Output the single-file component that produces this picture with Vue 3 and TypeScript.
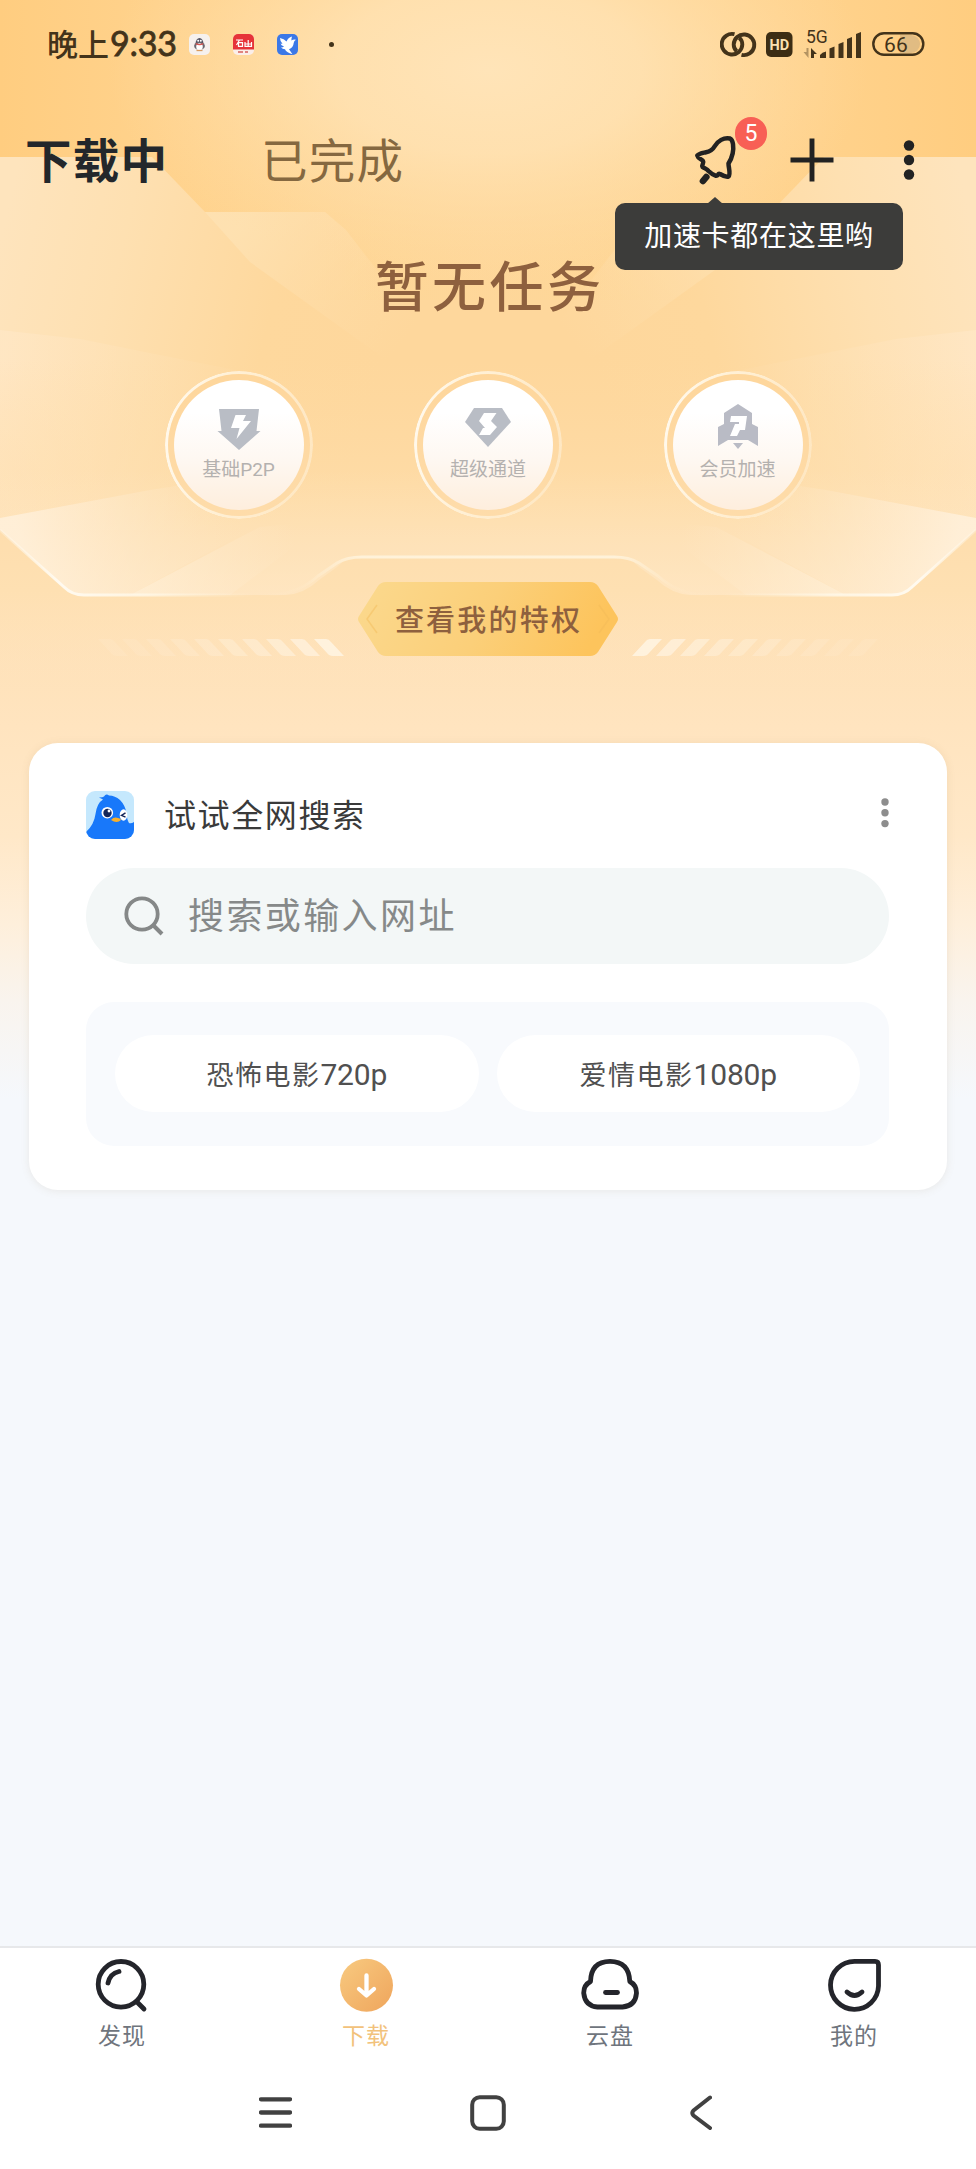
<script setup lang="ts">
interface Perk { label: string; kind: 'bolt' | 'gem' | 'rocket' }
interface Suggestion { title: string; quality: string }
interface NavItem { label: string; kind: 'discover' | 'download' | 'cloud' | 'mine'; active?: boolean }

const perks: Perk[] = [
  { label: '基础P2P', kind: 'bolt' },
  { label: '超级通道', kind: 'gem' },
  { label: '会员加速', kind: 'rocket' },
]
const suggestions: Suggestion[] = [
  { title: '恐怖电影', quality: '720p' },
  { title: '爱情电影', quality: '1080p' },
]
const navItems: NavItem[] = [
  { label: '发现', kind: 'discover' },
  { label: '下载', kind: 'download', active: true },
  { label: '云盘', kind: 'cloud' },
  { label: '我的', kind: 'mine' },
]
const stripes = Array.from({ length: 10 }, (_, i) => ({ x: 314 - i * 24, o: 0.66 * Math.pow(0.8, i) }))
</script>

<template>
  <div class="page">
    <svg class="backdrop" width="976" height="1100" viewBox="0 0 976 1100" aria-hidden="true">
      <defs>
        <linearGradient id="base" x1="0" y1="0" x2="0" y2="1">
          <stop offset="0" stop-color="#ffd694" />
          <stop offset=".36" stop-color="#fed79c" />
          <stop offset=".52" stop-color="#fedfb2" />
          <stop offset=".66" stop-color="#ffe4bf" />
          <stop offset=".76" stop-color="#ffe8c8" />
          <stop offset=".84" stop-color="#feefdb" />
          <stop offset=".91" stop-color="#f9f4ee" />
          <stop offset="1" stop-color="#f5f8fc" />
        </linearGradient>
        <linearGradient id="side" x1="0" y1="0" x2="1" y2="0">
          <stop offset="0" stop-color="#ffcd80" />
          <stop offset=".16" stop-color="#ffd28c" />
          <stop offset=".5" stop-color="#ffd794" stop-opacity="0" />
          <stop offset=".84" stop-color="#ffd28c" />
          <stop offset="1" stop-color="#ffcd80" />
        </linearGradient>
        <radialGradient id="glow" gradientUnits="userSpaceOnUse" cx="0" cy="0" r="1" gradientTransform="translate(488 70) scale(380 210)">
          <stop offset="0" stop-color="#ffe4b8" />
          <stop offset=".4" stop-color="#ffe2b3" stop-opacity=".85" />
          <stop offset="1" stop-color="#ffdca5" stop-opacity="0" />
        </radialGradient>
        <linearGradient id="wing" gradientUnits="userSpaceOnUse" x1="0" y1="240" x2="390" y2="330">
          <stop offset="0" stop-color="#fee4bd" />
          <stop offset=".3" stop-color="#fee0b1" />
          <stop offset=".7" stop-color="#fed89d" />
          <stop offset="1" stop-color="#fed89d" stop-opacity="0" />
        </linearGradient>
        <linearGradient id="band" gradientUnits="userSpaceOnUse" x1="250" y1="212" x2="410" y2="335">
          <stop offset="0" stop-color="#fee2b3" stop-opacity=".8" />
          <stop offset="1" stop-color="#fedda9" stop-opacity="0" />
        </linearGradient>
        <linearGradient id="shard" gradientUnits="userSpaceOnUse" x1="0" y1="400" x2="300" y2="430">
          <stop offset="0" stop-color="#ffe7c5" stop-opacity=".8" />
          <stop offset="1" stop-color="#fedba5" stop-opacity="0" />
        </linearGradient>
        <linearGradient id="pane" gradientUnits="userSpaceOnUse" x1="20" y1="540" x2="230" y2="480">
          <stop offset="0" stop-color="#fff0da" stop-opacity=".9" />
          <stop offset="1" stop-color="#ffe6c2" stop-opacity="0" />
        </linearGradient>
        <linearGradient id="facet" gradientUnits="userSpaceOnUse" x1="130" y1="590" x2="300" y2="560">
          <stop offset="0" stop-color="#fff0d8" stop-opacity=".75" />
          <stop offset="1" stop-color="#ffe9cb" stop-opacity="0" />
        </linearGradient>
        <linearGradient id="edge" gradientUnits="userSpaceOnUse" x1="0" y1="0" x2="976" y2="0">
          <stop offset="0" stop-color="#fff8ea" stop-opacity=".3" />
          <stop offset=".06" stop-color="#fffaf0" />
          <stop offset=".15" stop-color="#fff8e8" stop-opacity=".8" />
          <stop offset=".26" stop-color="#fff3dc" stop-opacity="0" />
          <stop offset=".31" stop-color="#fff3dc" stop-opacity=".1" />
          <stop offset=".37" stop-color="#fff3dc" stop-opacity=".95" />
          <stop offset=".63" stop-color="#fff3dc" stop-opacity=".95" />
          <stop offset=".69" stop-color="#fff3dc" stop-opacity=".1" />
          <stop offset=".74" stop-color="#fff3dc" stop-opacity="0" />
          <stop offset=".85" stop-color="#fff8e8" stop-opacity=".8" />
          <stop offset=".94" stop-color="#fffaf0" />
          <stop offset="1" stop-color="#fff8ea" stop-opacity=".3" />
        </linearGradient>
        <linearGradient id="floor" gradientUnits="userSpaceOnUse" x1="0" y1="470" x2="0" y2="595">
          <stop offset="0" stop-color="#ffe9c9" stop-opacity="0" />
          <stop offset="1" stop-color="#ffe9ca" stop-opacity=".6" />
        </linearGradient>
        <g id="half">
          <path d="M0 157H152L205 212H325L346 230L450 370V530H0Z" fill="url(#wing)" />
          <path d="M205 212H325L346 230L455 370H400L250 262Z" fill="url(#band)" />
          <path d="M0 330L80 339L240 371L330 392V530H0Z" fill="url(#shard)" />
        </g>
        <g id="panes">
          <path d="M0 518L150 490L280 470L240 535L130 595H80L65 588L0 530Z" fill="url(#pane)" />
          <path d="M130 595L260 527L330 520L230 595Z" fill="url(#facet)" />
        </g>
        <linearGradient id="mist" gradientUnits="userSpaceOnUse" x1="0" y1="360" x2="0" y2="530">
          <stop offset="0" stop-color="#fedca7" stop-opacity="0" />
          <stop offset="1" stop-color="#fee0b2" />
        </linearGradient>
        <linearGradient id="deck" gradientUnits="userSpaceOnUse" x1="0" y1="500" x2="0" y2="680">
          <stop offset="0" stop-color="#fedcab" />
          <stop offset=".5" stop-color="#fee0b2" />
          <stop offset="1" stop-color="#ffe4bf" stop-opacity="0" />
        </linearGradient>
      </defs>
      <rect width="976" height="1100" fill="url(#base)" />
      <rect width="976" height="400" fill="url(#side)" />
      <rect y="300" width="976" height="230" fill="#fed79c" />
      <use href="#half" />
      <use href="#half" transform="matrix(-1 0 0 1 976 0)" />
      <rect width="976" height="300" fill="url(#glow)" />
      <rect y="360" width="976" height="170" fill="url(#mist)" opacity=".7" />
      <path d="M0 530H976V680H0Z" fill="url(#deck)" />
      <path d="M0 470H976V530L911 588Q904 595 892 595H690Q672 594 657 580L639 567Q629 556 614 556H362Q347 556 337 567L319 580Q304 594 286 595H84Q72 595 65 588L0 530Z" fill="url(#floor)" />
      <use href="#panes" />
      <use href="#panes" transform="matrix(-1 0 0 1 976 0)" />
      <path d="M0 530L64 587Q72 595 84 595H270Q298 594 318 576L337 563Q347 557 362 557H614Q629 557 639 563L658 576Q678 594 706 595H892Q904 595 912 587L976 530" fill="none" stroke="url(#edge)" stroke-width="3" />
      <g fill="#fffaf0">
        <path v-for="s in stripes" :key="'l' + s.x" :d="`M${s.x} 639h12q3 0 5 3l13 14h-11q-4 0-6-3z`" :opacity="s.o" />
        <g transform="matrix(-1 0 0 1 976 0)">
          <path v-for="s in stripes" :key="'r' + s.x" :d="`M${s.x} 639h12q3 0 5 3l13 14h-11q-4 0-6-3z`" :opacity="s.o" />
        </g>
      </g>
    </svg>

    <header class="status">
      <span class="clock">晚上<span class="digits">9:33</span></span>
      <div class="notices">
        <svg width="21" height="21" viewBox="0 0 21 21">
          <rect width="21" height="21" rx="5" fill="#f6f1ee" />
          <ellipse cx="10.500" cy="10" rx="4" ry="6" fill="#565665" />
          <ellipse cx="10.500" cy="12" rx="5.400" ry="4" fill="#6b6870" />
          <ellipse cx="10.500" cy="12.800" rx="3.300" ry="3.600" fill="#fff" />
          <path d="M6.800 9.600q3.700 2 7.400 0" stroke="#d95450" stroke-width="1.200" fill="none" />
          <circle cx="9.200" cy="6.800" r="1" fill="#fff" /><circle cx="11.800" cy="6.800" r="1" fill="#fff" />
          <path d="M7.500 16.500h6" stroke="#d99a5d" stroke-width="1.300" />
        </svg>
        <svg width="21" height="21" viewBox="0 0 21 21">
          <rect width="21" height="21" rx="5" fill="#fbeee9" />
          <path d="M0 5a5 5 0 0 1 5-5h11a5 5 0 0 1 5 5v10.500H0z" fill="#e63339" />
          <path d="M3 6h7M6.500 6l-3 5M5.500 8.700h4v3.600h-4zM12 8v4.300h6.500V8M15.200 6v6M12 10h6.500" stroke="#fff" stroke-width="1.200" fill="none" />
          <path d="M5 18h5M12 18h3" stroke="#d8625c" stroke-width="1.300" />
        </svg>
        <svg width="21" height="21" viewBox="0 0 21 21">
          <rect width="21" height="21" rx="5" fill="#3b78e7" />
          <path d="M3 4q4 .5 6.500 3.500Q11 3.500 15 2.500q-.8 2.500-.5 4 2-1.500 4.500-.8-2 1-2.300 3.300-.5 5-4.700 6.200l3.500 5q-6.500-2-7.500-5-2.500 0-4-1.700 2.200 0 3-1-3-.8-3.500-3 1 .5 2 .3Q3 7.500 3 4z" fill="#fff" />
        </svg>
      </div>
      <i class="more-dot"></i>
      <svg class="indicators" width="206" height="34" viewBox="720 27 206 34">
        <g fill="none" stroke="#43331a" stroke-width="3.900">
          <path d="M734.500 34.200A10.300 10.300 0 1 0 742.300 44.500Q742.300 40.500 739.300 37.800" />
          <path d="M741.500 54.800A10.300 10.300 0 1 0 733.700 44.500Q733.700 48.500 736.700 51.200" />
        </g>
        <rect x="766" y="32" width="26.500" height="25" rx="5" fill="#3c2d14" />
        <text x="779.300" y="49.500" text-anchor="middle" font-size="14.500" font-weight="700" fill="#fbe0b0">HD</text>
        <text x="806" y="43" font-size="17.500" fill="#43331a">5G</text>
        <g fill="#43331a">
          <path d="M820 58v-3q2-3 6-3.500V58zM829.500 58V48.500l5-2V58zM838.500 58V44l5-2V58zM847 58V39l5-2V58zM856 58V34l5-2V58z" />
          <path d="M811 48l6 6h-3v4h-3z" />
          <path d="M808.500 48v10l-5-6h3v-4z" opacity=".4" />
        </g>
        <path d="M900 35h11a9 9 0 0 1 0 18h-11z" fill="#d9b682" opacity=".8" />
        <rect x="873.300" y="33.300" width="50" height="21.500" rx="10.700" fill="none" stroke="#43331a" stroke-width="2.400" />
        <text x="884" y="51.800" font-size="21" letter-spacing=".3" fill="#43331a">66</text>
      </svg>
    </header>

    <nav class="tabs">
      <span class="tab current">下载中</span>
      <span class="tab">已完成</span>
      <div class="actions">
        <div class="boost">
          <svg width="50" height="56" viewBox="692 132 50 56">
            <path d="M731 138.500C725 137 718.500 141 715.500 146.500C713.500 150 711 151.500 707 152.300C703.500 153 700.500 153 698.300 155.500C699 158.500 702.500 159 704 161C705.500 163.500 702 165 703.500 167C705.500 168.500 708 168.500 709.500 171C712 173.500 714.500 175 717 175.800C719.500 176 718.500 173 721 174C723.500 175.500 726.500 177.500 729.500 176.500C732 174 729.500 168 729.500 163.500C733 158 735 151 734 144C733.500 141 732.500 139.200 731 138.500Z" fill="none" stroke="#222" stroke-width="4.500" stroke-linejoin="round" />
            <path d="M707.300 177l-3.300 4" stroke="#222" stroke-width="6.600" stroke-linecap="round" />
          </svg>
          <span class="badge">5</span>
          <div class="tip">加速卡都在这里哟</div>
        </div>
        <svg class="plus" width="44" height="44" viewBox="0 0 44 44"><path d="M22 .5v43M.5 22h43" stroke="#222" stroke-width="4.900" /></svg>
        <svg class="dots" width="12" height="42" viewBox="0 0 12 42"><g fill="#222"><circle cx="6" cy="6.500" r="5.200" /><circle cx="6" cy="21" r="5.200" /><circle cx="6" cy="35.500" r="5.200" /></g></svg>
      </div>
    </nav>

    <section class="hero">
      <h1>暂无任务</h1>
      <div class="perks">
        <div v-for="p in perks" :key="p.kind" class="perk">
          <div class="disc">
            <svg width="52" height="52" viewBox="-26 -26 52 52">
              <g v-if="p.kind === 'bolt'">
                <path d="M-20-21H20L17.500 1H21.500L0 20-21.500 1H-17.500Z" fill="#b9bdc5" />
                <path d="M-3.500-15H7L4-9H12L-2.500 9 .5-2H-8Z" fill="#fff" />
              </g>
              <g v-else-if="p.kind === 'gem'">
                <path d="M-14-22H14L23-8 0 17-23-8Z" fill="#b9bdc5" />
                <path d="M-4-17H8.500L4-10.500 3-9 9-3 2 5H-9L-5-2H-3L-9-9Z" fill="#fff" />
              </g>
              <g v-else>
                <path d="M0-26 14-17V-6L20-3V16L10 10H-10L-20 16V-3L-14-6V-17Z" fill="#b9bbc5" />
                <path d="M-7-14H9L7 0H2L-1 6H-8L-3-6H1V-8H-8Z" fill="#fff" />
                <path d="M-5 13H5L0 19Z" fill="#b9bbc5" />
              </g>
            </svg>
            <span>{{ p.label }}</span>
          </div>
        </div>
      </div>
      <div class="privilege">
        <svg class="plate" width="262" height="74" viewBox="0 0 262 74">
          <defs><linearGradient id="gold" x1="0" y1="0" x2="1" y2=".15"><stop offset="0" stop-color="#fbd98e" /><stop offset=".55" stop-color="#fbcf79" /><stop offset="1" stop-color="#fdc45c" /></linearGradient></defs>
          <path d="M29 0H233Q238 0 241 4L260 34Q262 37 260 40L241 70Q238 74 233 74H29Q24 74 21 70L2 40Q0 37 2 34L21 4Q24 0 29 0Z" fill="url(#gold)" />
          <path d="M20 23L10 37L20 51M242 23L252 37L242 51" fill="none" stroke="#f1bb58" stroke-width="1.500" opacity=".45" />
        </svg>
        <span>查看我的特权</span>
      </div>
    </section>

    <section class="card">
      <div class="head">
        <svg width="48" height="48" viewBox="0 0 48 48">
          <defs><clipPath id="tile"><rect width="48" height="48" rx="9" /></clipPath></defs>
          <g clip-path="url(#tile)">
            <rect width="48" height="48" fill="#c5e8fd" />
            <path d="M0 48V41Q8 34 9.500 23Q11 12 17 8.500L13 6.500Q17 6.500 18 5.500Q20 2 23 4.500Q29 4.500 34 9Q39 14 40.500 22Q41 29 43 32Q45 33 48 31V48Z" fill="#1878fa" />
            <circle cx="21.300" cy="21.700" r="5.800" fill="#fff" /><circle cx="21.500" cy="22" r="4.200" fill="#14265a" /><circle cx="23" cy="20" r="1.400" fill="#fff" />
            <ellipse cx="37.500" cy="24" rx="3.800" ry="5.800" fill="#fff" /><path d="M39.500 21.800l-4 2.500 4 1.800" stroke="#14265a" stroke-width="1.400" fill="none" />
            <path d="M25 29q3-3.500 7-2 3 .5 3 2-4 4-10 0z" fill="#f8b02d" />
          </g>
        </svg>
        <h2>试试全网搜索</h2>
        <svg class="card-more" width="8" height="30" viewBox="0 0 8 30"><g fill="#8d8d8d"><circle cx="4" cy="4" r="3.700" /><circle cx="4" cy="14.800" r="3.700" /><circle cx="4" cy="25.600" r="3.700" /></g></svg>
      </div>
      <div class="search">
        <svg width="40" height="40" viewBox="0 0 40 40"><circle cx="18" cy="18" r="15.700" fill="none" stroke="#858888" stroke-width="3.800" /><path d="M28.500 28.500L38 38" stroke="#858888" stroke-width="4" /></svg>
        <span>搜索或输入网址</span>
      </div>
      <div class="suggestions">
        <div v-for="s in suggestions" :key="s.title" class="chip">{{ s.title }}<span class="quality">{{ s.quality }}</span></div>
      </div>
    </section>

    <nav class="bottom">
      <div v-for="n in navItems" :key="n.kind" class="item" :class="{ active: n.active }">
        <svg width="64" height="60" viewBox="-32 -30 64 60" fill="none" stroke="#24252b" stroke-width="4.800" stroke-linecap="round" stroke-linejoin="round">
          <template v-if="n.kind === 'discover'">
            <circle cx="-1" cy="-.7" r="22.800" /><path d="M15.500 17.500L22 24M-14-2Q-12-11.500-3-13.500" />
          </template>
          <template v-else-if="n.kind === 'download'">
            <defs><linearGradient id="sun" x1="0" y1="0" x2="1" y2="1"><stop offset="0" stop-color="#f8ca80" /><stop offset="1" stop-color="#efa55c" /></linearGradient></defs>
            <circle cx=".5" cy=".3" r="26.500" fill="url(#sun)" stroke="none" />
            <path d="M.5-9.500V9.500M-7 4L.5 10.500 8 4" stroke="#fff" stroke-width="4.300" />
          </template>
          <template v-else-if="n.kind === 'cloud'">
            <path d="M-19.500-3.500Q-19-23.500 0-23.700Q19-23.500 19.800-3.500Q26.500 0 26.500 8Q25.500 21 12.500 22H-12.500Q-25 21-26.300 8Q-26.300 0-19.500-3.500Z" /><path d="M-4.500 7.500H7.500" />
          </template>
          <template v-else>
            <path d="M.500-23.700H21Q24.500-23.700 24.500-20V1A24 24 0 1 1 .500-23.700Z" /><path d="M-7 7Q.500 14 8 7" />
          </template>
        </svg>
        <span>{{ n.label }}</span>
      </div>
    </nav>

    <footer class="keys">
      <svg width="33" height="31" viewBox="0 0 33 31"><path d="M2 2.300H31M2 15.500H31M2 28.700H31" stroke="#414141" stroke-width="4.300" stroke-linecap="round" /></svg>
      <svg width="36" height="36" viewBox="0 0 36 36"><rect x="2.200" y="2.200" width="31.600" height="31.600" rx="7.500" fill="none" stroke="#414141" stroke-width="4" /></svg>
      <svg width="22" height="36" viewBox="0 0 22 36"><path d="M20 2.500L3.500 15.500Q1 18 3.500 20.500L20 33" fill="none" stroke="#414141" stroke-width="4" stroke-linecap="round" /></svg>
    </footer>
  </div>
</template>

<style>
html, body { background: #f5f8fc; }
</style>

<style scoped>
.page {
  position: relative;
  width: 976px;
  height: 2169px;
  display: flex;
  flex-direction: column;
  overflow: hidden;
  background: #f5f8fc;
  font-family: Roboto, "Noto Sans CJK SC", sans-serif;
}
.page > * { position: relative; box-sizing: border-box; }
.page svg { display: block; flex: none; }
.page > .backdrop { position: absolute; top: 0; left: 0; }
.status { height: 88px; display: flex; align-items: center; padding: 0 50px 0 47px; color: #43331a; z-index: 1; }
.clock { width: 142px; display: flex; align-items: baseline; font-size: 31px; line-height: 44px; font-weight: 500; white-space: nowrap; }
.digits { font-family: Lato, sans-serif; font-weight: 400; font-size: 34px; letter-spacing: -.2px; -webkit-text-stroke: .8px #43331a; margin-left: 1px; }
.notices { display: flex; gap: 23px; }
.more-dot { width: 5px; height: 5px; border-radius: 50%; background: #43331a; margin-left: 31px; }
.indicators { margin-left: auto; }
.tabs { height: 144px; display: flex; align-items: center; padding-left: 25px; z-index: 3; }
.tab { width: 236px; font-size: 46.500px; letter-spacing: 1.200px; line-height: 60px; padding-top: 3px; color: #856840; white-space: nowrap; }
.tab.current { font-weight: 700; color: #23272b; }
.actions { margin-left: auto; display: flex; align-items: center; padding-right: 61px; }
.boost { position: relative; margin-right: 48px; left: -1px; }
.badge { position: absolute; left: 44px; top: -15px; width: 32px; height: 33px; border-radius: 17px; background: #f85f55; color: #fff; font-size: 23px; line-height: 34px; text-align: center; }
.tip { position: absolute; left: -76px; top: 71px; width: 288px; height: 67px; box-sizing: border-box; border-radius: 10px; background: #3c3c3a; color: #fff; font-size: 28px; letter-spacing: .7px; line-height: 67px; text-align: center; white-space: nowrap; }
.tip::before { content: ""; position: absolute; left: 92px; top: -6px; border: 8px solid transparent; border-top: 0; border-bottom: 7px solid #3c3c3a; }
.plus { margin-right: 69px; }
.hero { height: 424px; display: flex; flex-direction: column; align-items: center; }
h1 { margin: 0; height: 108px; line-height: 113px; font-size: 54px; font-weight: 500; letter-spacing: 3.400px; padding-left: 3px; color: #8e603e; }
.perks { margin-top: 31px; display: flex; gap: 101.500px; }
.perk { width: 148px; height: 148px; box-sizing: border-box; padding: 9px; border-radius: 50%; background: linear-gradient(#fed69b, #fedcaa); position: relative; }
.perk::before { content: ""; position: absolute; inset: 0; padding: 3px; border-radius: 50%; background: linear-gradient(100deg, #fffaf0, #fff0d5 40%, #fee6c0); mask: linear-gradient(#000 0 0) content-box exclude, linear-gradient(#000 0 0); }
.disc { width: 130px; height: 130px; border-radius: 50%; background: linear-gradient(#fff 25%, #fef8f2 60%, #feeedd); display: flex; flex-direction: column; align-items: center; box-sizing: border-box; padding-top: 24px; }
.disc span { font-size: 19px; line-height: 24px; margin-top: 2px; color: #b4b1af; white-space: nowrap; }
.privilege { width: 262px; height: 74px; margin-top: 63px; position: relative; display: flex; align-items: center; justify-content: center; }
.plate { position: absolute; left: 0; top: 0; }
.privilege span { position: relative; font-size: 29px; letter-spacing: 2.200px; padding: 3px 0 0 1px; font-weight: 500; color: #8e603e; line-height: 40px; }
.card { width: 918px; height: 447px; margin: 87px 29px 0; border-radius: 29px; background: #fff; padding: 48px 58px 0 57px; box-shadow: 0 1px 8px rgba(150, 120, 80, .12); }
.head { display: flex; align-items: center; height: 48px; }
h2 { margin: 0 auto 0 30px; font-size: 32px; letter-spacing: 1.600px; line-height: 44px; padding-top: 2px; font-weight: 400; color: #3a3a3a; }
.card-more { margin: -4px 0 0; }
.search { margin-top: 29px; height: 96px; border-radius: 48px; background: #f3f7f7; display: flex; align-items: center; padding-left: 38px; color: #868989; font-size: 36px; letter-spacing: 2.400px; line-height: 50px; }
.search span { margin-left: 24px; padding-top: 2px; }
.suggestions { margin-top: 38px; height: 144px; border-radius: 28px; background: #f8fafd; display: flex; box-sizing: border-box; padding: 33px 29px 34px; gap: 18px; }
.chip { flex: 1; border-radius: 39px; background: #fff; display: flex; align-items: baseline; justify-content: center; font-size: 27px; letter-spacing: 1.500px; line-height: 79px; color: #505050; white-space: nowrap; }
.quality { font-size: 30px; letter-spacing: -.2px; }
.bottom { margin-top: auto; height: 114px; border-top: 2px solid #e7e8ea; background: #fff; display: flex; padding-top: 7px; }
.item { width: 244px; display: flex; flex-direction: column; align-items: center; }
.item span { margin-top: 7px; font-size: 23px; letter-spacing: .9px; line-height: 30px; color: #6f757d; }
.item.active span { color: #f2c27b; }
.keys { height: 109px; padding-bottom: 4px; background: #fff; display: flex; align-items: center; padding-left: 259px; }
.keys svg:nth-child(2) { margin-left: 178px; }
.keys svg:nth-child(3) { margin-left: 184px; }
</style>
